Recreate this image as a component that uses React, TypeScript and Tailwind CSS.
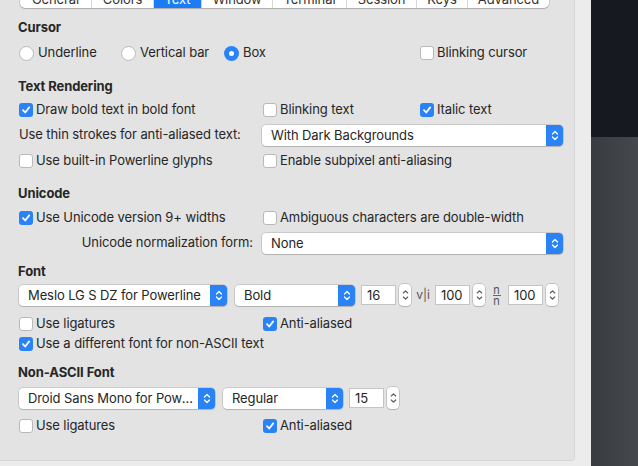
import type { ReactNode } from "react";

const font = "font-['Inter','Noto_Sans',sans-serif]";

function Check({ on }: { on?: boolean }) {
  return on ? (
    <span className="w-[14px] h-[14px] rounded-[3px] bg-[#2a83f6] flex items-center justify-center shrink-0">
      <svg width="10" height="10" viewBox="0 0 10 10">
        <path d="M2 5.2 L4.2 7.5 L8.2 2.4" fill="none" stroke="#fff" strokeWidth="1.8" strokeLinecap="round" strokeLinejoin="round" />
      </svg>
    </span>
  ) : (
    <span className="w-[14px] h-[14px] rounded-[3px] bg-white border border-[#b9b9b9] shrink-0" />
  );
}

function Radio({ on }: { on?: boolean }) {
  return on ? (
    <span className="w-[15px] h-[15px] rounded-full bg-[#2a83f6] flex items-center justify-center shrink-0">
      <span className="w-[5px] h-[5px] rounded-full bg-white" />
    </span>
  ) : (
    <span className="w-[15px] h-[15px] rounded-full bg-white border border-[#b9b9b9] shrink-0" />
  );
}

function Item({ on, children, w }: { on?: boolean; children: ReactNode; w?: string }) {
  return (
    <div className={`flex items-center gap-[3px] ${w ?? ""}`}>
      <Check on={on} />
      <span>{children}</span>
    </div>
  );
}

function Select({ label, w }: { label: string; w: string }) {
  return (
    <div className={`${w} h-[21px] flex rounded-[4px] bg-white shadow-[0_0_0_0.5px_rgba(0,0,0,0.22),0_1px_1px_rgba(0,0,0,0.12)] overflow-hidden shrink-0`}>
      <span className="flex-1 pl-[9px] leading-[21px] truncate">{label}</span>
      <span className="w-[17px] bg-[#2a83f6] flex items-center justify-center">
        <svg width="8" height="13" viewBox="0 0 8 13">
          <path d="M1.5 5 L4 2.5 L6.5 5 M1.5 8 L4 10.5 L6.5 8" fill="none" stroke="#fff" strokeWidth="1.3" strokeLinecap="round" strokeLinejoin="round" />
        </svg>
      </span>
    </div>
  );
}

function NumField({ value, w = "w-[35px]" }: { value: string; w?: string }) {
  return (
    <div className="flex items-center gap-[3px] shrink-0">
      <span className={`${w} h-[20px] bg-white border border-[#c4c4c4] pl-[5px] leading-[18px]`}>{value}</span>
      <span className="w-[12px] h-[22px] bg-white rounded-[4px] shadow-[0_0_0_0.5px_rgba(0,0,0,0.25),0_1px_1px_rgba(0,0,0,0.1)] flex items-center justify-center">
        <svg width="7" height="14" viewBox="0 0 7 14">
          <path d="M1.3 5 L3.5 2.8 L5.7 5 M1.3 9 L3.5 11.2 L5.7 9" fill="none" stroke="#555" strokeWidth="1.1" strokeLinecap="round" strokeLinejoin="round" />
        </svg>
      </span>
    </div>
  );
}

const tabs = ["General", "Colors", "Text", "Window", "Terminal", "Session", "Keys", "Advanced"];
const tabW = ["w-[71px]", "w-[62px]", "w-[48px]", "w-[71px]", "w-[74px]", "w-[70px]", "w-[51px]", "w-[82px]"];

export default function App() {
  return (
    <div className={`w-[638px] h-[466px] overflow-hidden bg-[#ececec] flex text-[13px] tracking-[-0.1px] text-[#262626] ${font}`}>
      <div className="w-[591px] shrink-0">
        <div className="w-[575px] h-[461px] bg-[#e3e3e3] border-r border-b border-[#d5d5d5] rounded-br-[4px] flex flex-col pl-[19px]">
          {/* Tabs */}
          <div className="flex -mt-[14px] ml-[1px] h-[22px] w-fit bg-white rounded-[5px] shadow-[0_0_0_0.5px_rgba(0,0,0,0.2),0_1px_1px_rgba(0,0,0,0.15)] overflow-hidden">
            {tabs.map((t, i) => (
              <span
                key={t}
                className={`${tabW[i]} flex items-end justify-center leading-[16px] pb-[1px] ${i > 0 ? "border-l border-[#d8d8d8]" : ""} ${t === "Text" ? "bg-[#1b7cf5] text-white" : "text-[#333]"}`}
              >
                {t}
              </span>
            ))}
          </div>

          {/* Cursor */}
          <div className="h-[20px] mt-[10px] -ml-[1px] flex items-center font-bold">Cursor</div>
          <div className="h-[20px] mt-[5px] flex items-center">
            <div className="w-[102px] flex items-center gap-[4px]"><Radio /><span>Underline</span></div>
            <div className="w-[103px] flex items-center gap-[4px]"><Radio /><span>Vertical bar</span></div>
            <div className="w-[196px] flex items-center gap-[4px]"><Radio on /><span>Box</span></div>
            <Item>Blinking cursor</Item>
          </div>

          {/* Text Rendering */}
          <div className="h-[20px] mt-[14px] -ml-[1px] flex items-center font-bold">Text Rendering</div>
          <div className="h-[20px] mt-[3px] flex items-center">
            <Item on w="w-[244px]">Draw bold text in bold font</Item>
            <Item w="w-[157px]">Blinking text</Item>
            <Item on>Italic text</Item>
          </div>
          <div className="h-[22px] mt-[4px] flex items-center">
            <span className="w-[243px]">Use thin strokes for anti-aliased text:</span>
            <Select label="With Dark Backgrounds" w="w-[301px]" />
          </div>
          <div className="h-[20px] mt-[5px] flex items-center">
            <Item w="w-[244px]">Use built-in Powerline glyphs</Item>
            <Item>Enable subpixel anti-aliasing</Item>
          </div>

          {/* Unicode */}
          <div className="h-[20px] mt-[13px] -ml-[1px] flex items-center font-bold">Unicode</div>
          <div className="h-[20px] mt-[4px] flex items-center">
            <Item on w="w-[244px]">Use Unicode version 9+ widths</Item>
            <Item>Ambiguous characters are double-width</Item>
          </div>
          <div className="h-[22px] mt-[4px] flex items-center">
            <span className="w-[243px] text-right pr-[9px]">Unicode normalization form:</span>
            <Select label="None" w="w-[301px]" />
          </div>

          {/* Font */}
          <div className="h-[20px] mt-[8px] -ml-[1px] flex items-center font-bold">Font</div>
          <div className="h-[22px] mt-[2px] flex items-center">
            <Select label="Meslo LG S DZ for Powerline" w="w-[208px]" />
            <div className="w-[8px]" />
            <Select label="Bold" w="w-[120px]" />
            <div className="w-[6px]" />
            <NumField value="16" />
            <span className="w-[24px] text-center text-[12px] text-[#555]">v|i</span>
            <NumField value="100" />
            <span className="w-[23px] flex flex-col items-center text-[11px] leading-[10px] text-[#555]">
              <span className="h-[10px] overflow-hidden">n</span>
              <span className="w-[8px] h-px bg-[#666]" />
              <span className="h-[10px] overflow-hidden">n</span>
            </span>
            <NumField value="100" />
          </div>
          <div className="h-[20px] mt-[8px] flex items-center">
            <Item w="w-[244px]">Use ligatures</Item>
            <Item on>Anti-aliased</Item>
          </div>
          <div className="h-[20px] flex items-center">
            <Item on>Use a different font for non-ASCII text</Item>
          </div>

          {/* Non-ASCII Font */}
          <div className="h-[20px] mt-[9px] -ml-[1px] flex items-center font-bold">Non-ASCII Font</div>
          <div className="h-[22px] mt-[4px] flex items-center">
            <Select label="Droid Sans Mono for Powe..." w="w-[196px]" />
            <div className="w-[8px]" />
            <Select label="Regular" w="w-[120px]" />
            <div className="w-[6px]" />
            <NumField value="15" />
          </div>
          <div className="h-[20px] mt-[7px] flex items-center">
            <Item w="w-[244px]">Use ligatures</Item>
            <Item on>Anti-aliased</Item>
          </div>
        </div>
      </div>

      {/* Terminal behind */}
      <div className="flex-1 flex flex-col">
        <div className="h-[137px] bg-[#16191f]" />
        <div className="flex-1 bg-gradient-to-r from-[#383b40] to-[#45484c]" />
      </div>
    </div>
  );
}
